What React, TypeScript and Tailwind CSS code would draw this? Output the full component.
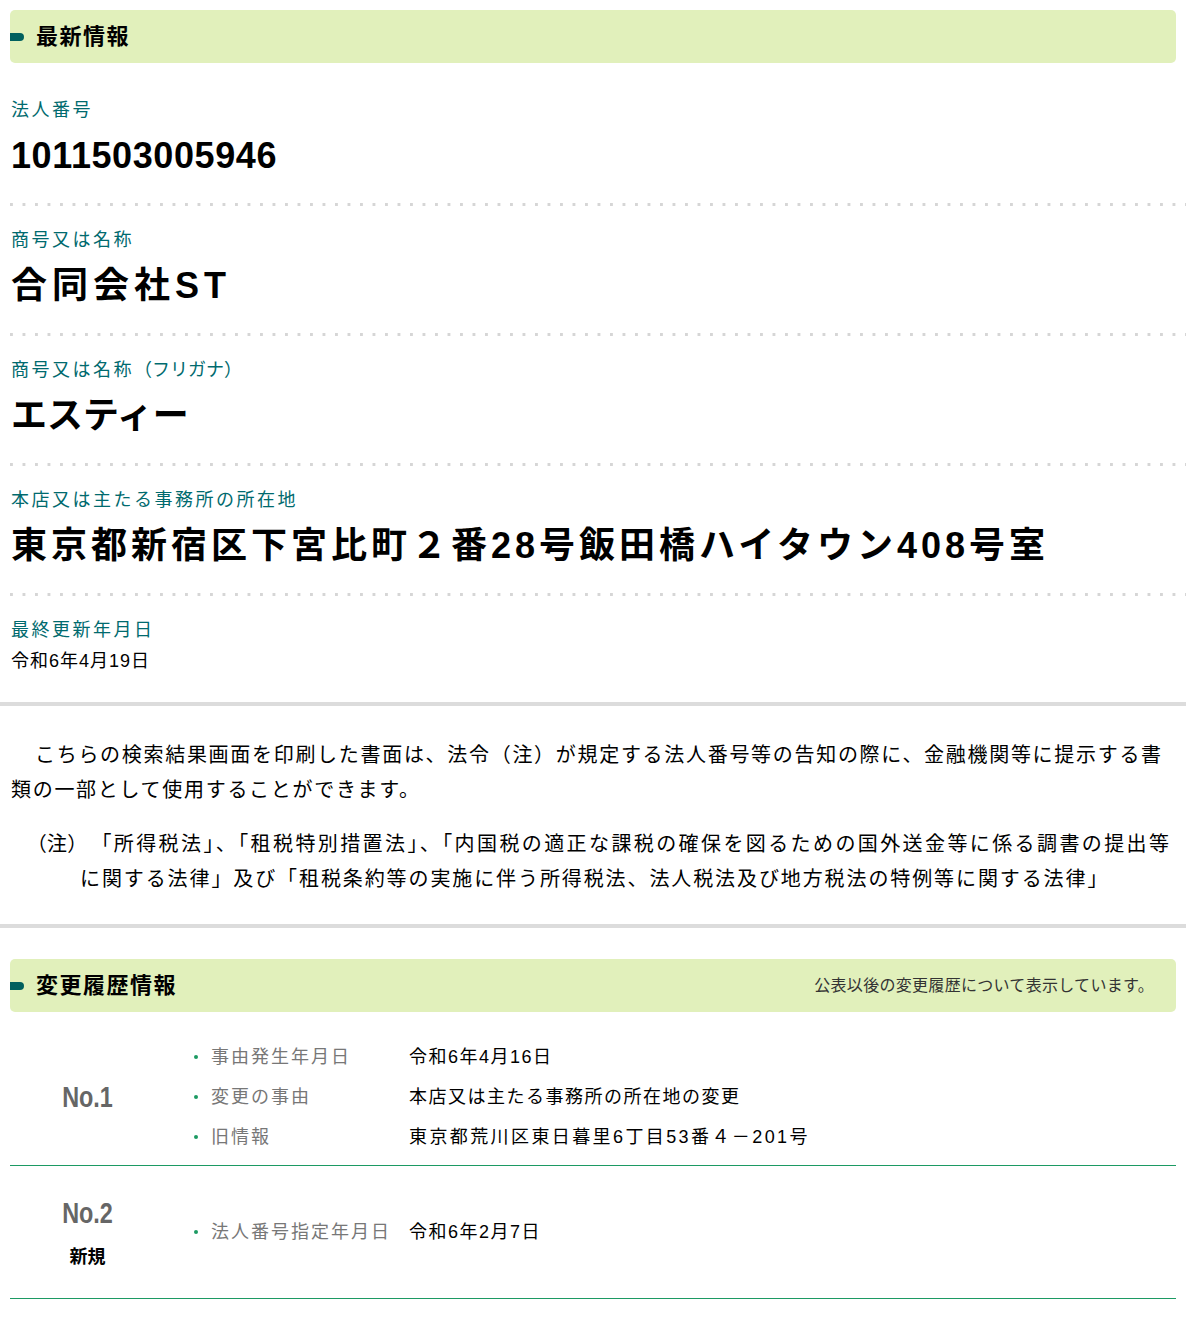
import React from "react";

const F = { fontFamily: '"Liberation Sans", "Noto Sans CJK JP", sans-serif' };

function Header({ title, note }: { title: string; note?: string }) {
  return (
    <div className="mx-[10px] flex h-[53px] items-center justify-between rounded-[5px] bg-[#e1f0bb]">
      <div className="flex items-center">
        <span className="block h-[8px] w-[14px] rounded-r-full bg-[#00605e]" />
        <span className="ml-[12px] text-[22px] font-bold leading-none tracking-[1.5px] text-black">{title}</span>
      </div>
      {note && <span className="mr-[22px] text-[16px] leading-none tracking-[0.3px] text-[#333]">{note}</span>}
    </div>
  );
}

const Dots = () => (
  <div className="ml-[10px] h-[3px] bg-[linear-gradient(to_right,#d6d6d6_3px,transparent_3px)] bg-[length:12.5px_3px] bg-repeat-x" />
);

function Field({ label, value, tracking }: { label: React.ReactNode; value: string; tracking: string }) {
  return (
    <div className="px-[11px] pt-[23px] pb-[23px]">
      <div className="text-[18px] leading-[22px] tracking-[2.5px] text-[#006a6e]">{label}</div>
      <div className={`mt-[11px] text-[36px] font-bold leading-[48px] text-black ${tracking}`}>{value}</div>
    </div>
  );
}

function Item({ label, value, valueTracking = "tracking-[1.5px]" }: { label: string; value: string; valueTracking?: string }) {
  return (
    <div className="flex h-[40px] items-center">
      <span className="mr-[13px] ml-[6px] block h-[4px] w-[4px] rounded-full bg-[#1c9a63]" />
      <span className="w-[198px] text-[18px] tracking-[2px] text-[#777]">{label}</span>
      <span className={`text-[18px] text-black ${valueTracking}`}>{value}</span>
    </div>
  );
}

export default function App() {
  return (
    <div className="w-[1186px] bg-white pt-[10px] pb-[18px]" style={F}>
      <Header title="最新情報" />
      <div className="pt-[13px]">
        <Field label="法人番号" value="1011503005946" tracking="tracking-[0.6px]" />
      </div>
      <Dots />
      <Field label="商号又は名称" value="合同会社ST" tracking="tracking-[5px]" />
      <Dots />
      <Field
        label={
          <>
            商号又は名称<span className="tracking-[0px]">（フリガナ）</span>
          </>
        }
        value="エスティー"
        tracking="tracking-[0px]"
      />
      <Dots />
      <Field label="本店又は主たる事務所の所在地" value="東京都新宿区下宮比町２番28号飯田橋ハイタウン408号室" tracking="tracking-[4px]" />
      <Dots />
      <div className="px-[11px] pt-[23px] pb-[30px]">
        <div className="text-[18px] leading-[22px] tracking-[2.5px] text-[#006a6e]">最終更新年月日</div>
        <div className="mt-[9px] text-[18px] leading-[22px] tracking-[1px] text-black">令和6年4月19日</div>
      </div>
      <div className="h-[4px] bg-[#dcdcdc]" />
      <div className="px-[11px] pt-[32px] pb-[27px] text-[20px] leading-[35px] tracking-[1.7px] text-black">
        <p className="indent-[24px]">
          こちらの検索結果画面を印刷した書面は、法令（注）が規定する法人番号等の告知の際に、金融機関等に提示する書
          <br />
          類の一部として使用することができます。
        </p>
        <p className="mt-[19px] pl-[69px] -indent-[44px]">
          <span className="tracking-[1px] [font-feature-settings:'palt']">（注）</span>
          <span className="tracking-[2.4px]">　「所得税法」、「租税特別措置法」、「内国税の適正な課税の確保を図るための国外送金等に係る調書の提出等</span>
          <br />
          <span className="tracking-[1.9px]">に関する法律」及び「租税条約等の実施に伴う所得税法、法人税法及び地方税法の特例等に関する法律」</span>
        </p>
      </div>
      <div className="h-[4px] bg-[#dcdcdc]" />
      <div className="pt-[31px]">
        <Header title="変更履歴情報" note="公表以後の変更履歴について表示しています。" />
      </div>
      <div className="mx-[10px]">
        <div className="flex items-center border-b border-[#1c9a63] pt-[25px] pb-[8px]">
          <div className="flex w-[155px] justify-center">
            <span className="inline-block scale-x-[0.78] text-[30px] font-bold leading-[36px] text-[#666]">No.1</span>
          </div>
          <div className="ml-[23px]">
            <Item label="事由発生年月日" value="令和6年4月16日" />
            <Item label="変更の事由" value="本店又は主たる事務所の所在地の変更" />
            <Item label="旧情報" value="東京都荒川区東日暮里6丁目53番４－201号" valueTracking="tracking-[2.4px]" />
          </div>
        </div>
        <div className="flex h-[133px] items-center border-b border-[#1c9a63]">
          <div className="flex w-[155px] flex-col items-center">
            <span className="inline-block scale-x-[0.78] text-[30px] font-bold leading-[34px] text-[#666]">No.2</span>
            <span className="mt-[15px] text-[18px] font-bold leading-[24px] text-black">新規</span>
          </div>
          <div className="ml-[23px]">
            <Item label="法人番号指定年月日" value="令和6年2月7日" />
          </div>
        </div>
      </div>
    </div>
  );
}
